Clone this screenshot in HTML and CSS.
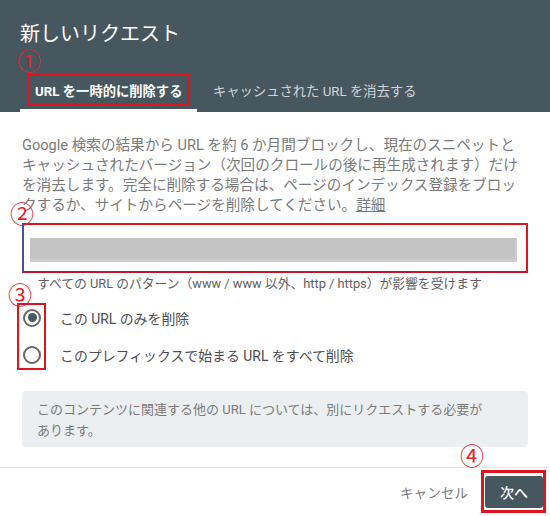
FILE: index.html
```html
<!DOCTYPE html>
<html lang="ja">
<head>
<meta charset="utf-8">
<title>新しいリクエスト</title>
<link rel="stylesheet" href="styles.css">
</head>
<body>
<div class="dialog">
  <header class="header">
    <h1 class="title">新しいリクエスト</h1>
    <span class="mark mark-1">①</span>
    <nav class="tabs">
      <div class="tab tab-active"><span class="tab-label tab-label-active">URL を一時的に削除する</span></div>
      <div class="tab"><span class="tab-label">キャッシュされた URL を消去する</span></div>
    </nav>
  </header>
  <main class="content">
    <p class="desc">Google 検索の結果から URL を約 6 か月間ブロックし、現在のスニペットと<br>キャッシュされたバージョン（次回のクロールの後に再生成されます）だけ<br>を消去します。完全に削除する場合は、ページのインデックス登録をブロッ<br>クするか、サイトからページを削除してください。<a class="link" href="#">詳細</a></p>
    <div class="field-wrap">
      <span class="mark mark-2">②</span>
      <div class="url-field"><div class="url-redacted"></div></div>
    </div>
    <p class="hint">すべての URL のパターン（www / www 以外、http / https）が影響を受けます</p>
    <div class="radios">
      <span class="mark mark-3">③</span>
      <span class="radio-box"></span>
      <label class="radio-row"><span class="radio radio-checked"></span><span>この URL のみを削除</span></label>
      <label class="radio-row"><span class="radio"></span><span>このプレフィックスで始まる URL をすべて削除</span></label>
    </div>
    <div class="info">このコンテンツに関連する他の URL については、別にリクエストする必要が<br>あります。</div>
  </main>
  <footer class="footer">
    <button class="btn-text">キャンセル</button>
    <div class="primary-wrap">
      <span class="mark mark-4">④</span>
      <span class="btn-box"></span>
      <button class="btn-primary">次へ</button>
    </div>
  </footer>
</div>
</body>
</html>
```

FILE: styles.css
```css
html, body {
  margin: 0;
  padding: 0;
  background: #fff;
}

body {
  font-family: Roboto, "Noto Sans CJK JP", sans-serif;
}

.dialog {
  width: 550px;
  height: 516px;
  background: #fff;
  display: flex;
  flex-direction: column;
  overflow: hidden;
}

.header {
  position: relative;
  height: 112px;
  box-sizing: border-box;
  background: #47575f;
  padding: 22px 0 0 20px;
}

.title {
  margin: 0;
  font-size: 20px;
  line-height: 24px;
  font-weight: 400;
  color: #fff;
}

.tabs {
  display: flex;
  margin-top: 28px;
  height: 38px;
}

.tab {
  height: 38px;
  box-sizing: border-box;
}

.tab-active {
  width: 177px;
  padding-left: 8px;
  border-bottom: 3px solid #fff;
}

.tab + .tab {
  margin-left: 16px;
}

.tab-label {
  display: inline-flex;
  align-items: center;
  height: 32px;
  font-size: 13.3px;
  color: rgba(255, 255, 255, 0.75);
  white-space: nowrap;
}

.tab-label-active {
  box-sizing: border-box;
  padding: 0 5px;
  border: 2px solid #e0141f;
  color: #fff;
  font-weight: 700;
}

.mark {
  position: absolute;
  font-family: "Noto Sans CJK JP", sans-serif;
  font-size: 24px;
  line-height: 20px;
  color: #e0222a;
}

.mark-1 {
  left: 17px;
  top: 50px;
}

.content {
  flex: 1;
  padding: 23px 22px 0;
}

.desc {
  margin: 0;
  font-size: 14.6px;
  line-height: 20px;
  color: #7a7a7a;
  white-space: nowrap;
}

.link {
  color: inherit;
  text-decoration: underline;
}

.field-wrap {
  position: relative;
  margin-top: 8px;
}

.mark-2 {
  left: -12px;
  top: -20px;
}

.url-field {
  height: 50px;
  box-sizing: border-box;
  border: 2px solid #e0141f;
  border-left-color: #4c4f9e;
  border-bottom-color: #c8142a;
  padding: 13px 9px 9px 6px;
  background: #fff;
}

.url-redacted {
  height: 24px;
  background: #c4c4c4;
  box-shadow: inset 0 -3px 0 #cdcdcd, inset -2px 0 0 #cdcdcd;
}

.hint {
  margin: 2px 0 0;
  padding-left: 15px;
  font-size: 12.8px;
  line-height: 17px;
  color: #606060;
  white-space: nowrap;
}

.radios {
  position: relative;
  margin-top: 7px;
}

.mark-3 {
  left: -14px;
  top: -15px;
}

.radio-box {
  position: absolute;
  left: -5px;
  top: 4px;
  width: 29px;
  height: 67px;
  box-sizing: border-box;
  border: 2px solid #e0141f;
}

.radio-row {
  display: flex;
  align-items: center;
  height: 37px;
  font-size: 13.9px;
  color: #4d4d4d;
}

.radio {
  display: flex;
  align-items: center;
  justify-content: center;
  width: 18px;
  height: 18px;
  box-sizing: border-box;
  margin-left: 1px;
  margin-right: 19px;
  border: 2px solid #666;
  border-radius: 50%;
}

.radio-checked::after {
  content: "";
  width: 9px;
  height: 9px;
  border-radius: 50%;
  background: #455a64;
}

.info {
  margin-top: 18px;
  padding: 8px 15px 6px;
  background: #eceff1;
  border-radius: 4px;
  font-size: 13px;
  line-height: 21px;
  color: #7a7a7a;
  white-space: nowrap;
}

.footer {
  height: 49px;
  box-sizing: border-box;
  border-top: 1px solid #e4e4e4;
  padding: 8px 7px 0 0;
  display: flex;
  justify-content: flex-end;
  align-items: flex-start;
}

.btn-text {
  height: 32px;
  padding: 0 17px 0 16px;
  border: 0;
  background: none;
  font-family: Roboto, "Noto Sans CJK JP", sans-serif;
  font-size: 13.6px;
  color: #7a7a7a;
}

.primary-wrap {
  position: relative;
}

.btn-box {
  position: absolute;
  left: -4px;
  right: -3px;
  top: -6px;
  bottom: -5px;
  border: 3px solid #e0141f;
}

.mark-4 {
  left: -25px;
  top: -31px;
}

.btn-primary {
  position: relative;
  display: block;
  width: 58px;
  height: 32px;
  border: 0;
  border-radius: 3px;
  background: #47575f;
  color: #fff;
  font-family: Roboto, "Noto Sans CJK JP", sans-serif;
  font-size: 14px;
  font-weight: 500;
}
```
